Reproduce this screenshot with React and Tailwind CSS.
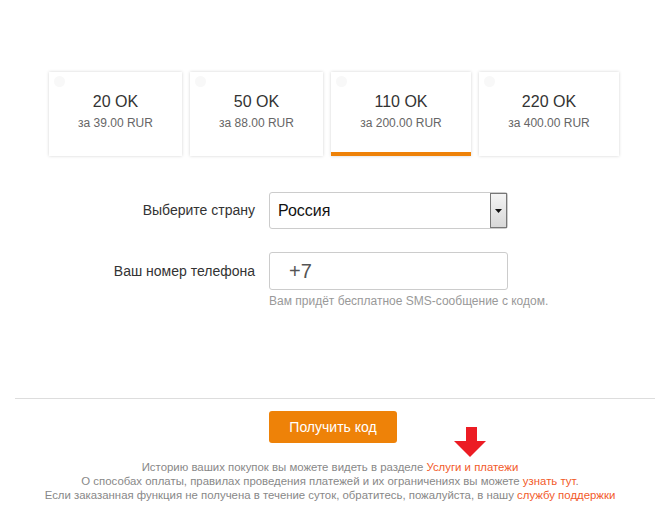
const packs = [
  { ok: '20 OK', price: 'за 39.00 RUR', w: 'w-[133px]' },
  { ok: '50 OK', price: 'за 88.00 RUR', w: 'w-[133px]' },
  { ok: '110 OK', price: 'за 200.00 RUR', w: 'w-[140px]', active: true },
  { ok: '220 OK', price: 'за 400.00 RUR', w: 'w-[140px]' },
]

function Pack({ ok, price, w, active }) {
  return (
    <div className={`${w} relative h-[84px] bg-white shadow-[0_0_3px_rgba(0,0,0,0.18)] flex flex-col items-center pt-[20px]`}>
      <span className="absolute left-[5px] top-[4px] w-[11px] h-[11px] rounded-full bg-[#f8f8f8]" />
      <div className="text-[16px] leading-[20px] text-[#333]">{ok}</div>
      <div className="mt-[3px] text-[12px] leading-[16px] text-[#666]">{price}</div>
      {active && <div className="absolute left-0 right-0 bottom-0 h-[4px] bg-[#ee8208]" />}
    </div>
  )
}

export default function App() {
  return (
    <div className="w-[670px] h-[520px] bg-white font-['Liberation_Sans',Arial,sans-serif] overflow-hidden">
      <div className="pt-[72px] flex justify-center gap-2 pr-[2px]">
        {packs.map(p => <Pack key={p.ok} {...p} />)}
      </div>

      <div className="mt-[36px] flex items-center">
        <div className="w-[255px] text-right text-[14px] text-[#333]">Выберите страну</div>
        <div className="ml-[14px] w-[239px] h-[37px] border border-[#ccc] rounded-[3px] flex items-center">
          <span className="flex-1 pl-[8px] text-[16px] text-[#111]">Россия</span>
          <div className="w-[17px] h-[35px] border border-[#777] bg-gradient-to-b from-[#f4f4f4] to-[#d8d8d8] flex items-center justify-center">
            <svg width="7" height="4" viewBox="0 0 7 4"><path d="M0 0h7L3.5 4z" fill="#111" /></svg>
          </div>
        </div>
      </div>

      <div className="mt-[23px] flex items-center">
        <div className="w-[255px] text-right text-[14px] text-[#333]">Ваш номер телефона</div>
        <div className="ml-[14px] w-[239px] h-[38px] border border-[#ccc] rounded-[3px] flex items-center pl-[19px] text-[20px] text-[#555]">+7</div>
      </div>
      <div className="ml-[269px] mt-[4px] text-[12px] leading-[14px] text-[#999]">Вам придёт бесплатное SMS-сообщение с кодом.</div>

      <div className="mx-[15px] mt-[90px] border-t border-[#ddd]" />

      <div className="mt-[12px] flex justify-center pr-[4px]">
        <div className="relative">
          <button className="w-[128px] h-[32px] rounded-[3px] bg-[#ee8208] text-white text-[14px]">Получить код</button>
          <svg className="absolute left-[185px] top-[16px]" width="32" height="30" viewBox="0 0 32 30">
            <path d="M12 0h11v14h9L16 30 0 14h12z" fill="#ec1c24" />
          </svg>
        </div>
      </div>

      <div className="mt-[17px] pr-[10px] text-center text-[11.4px] leading-[14px] text-[#888]">
        <p>Историю ваших покупок вы можете видеть в разделе <span className="text-[#f25a2a]">Услуги и платежи</span></p>
        <p>О способах оплаты, правилах проведения платежей и их ограничениях вы можете <span className="text-[#f25a2a]">узнать тут</span>.</p>
        <p>Если заказанная функция не получена в течение суток, обратитесь, пожалуйста, в нашу <span className="text-[#f25a2a]">службу поддержки</span></p>
      </div>
    </div>
  )
}
